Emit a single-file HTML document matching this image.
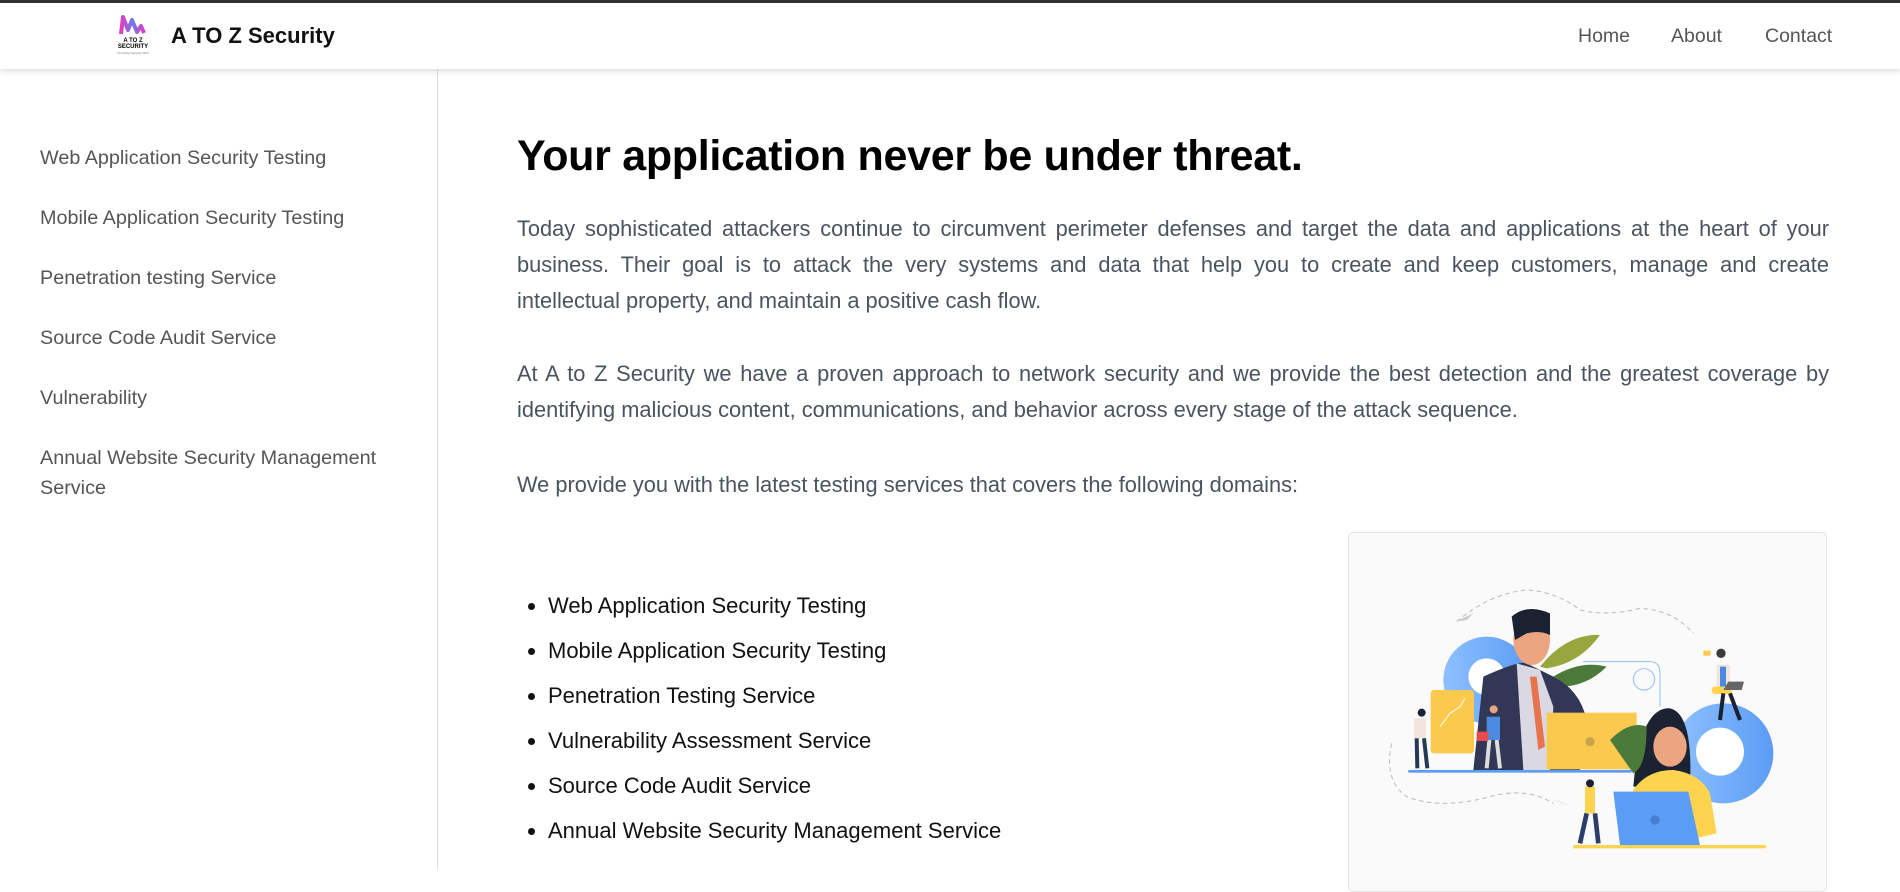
<!DOCTYPE html>
<html><head><meta charset="utf-8"><style>
*{margin:0;padding:0;box-sizing:border-box}
body{width:1900px;height:869px;overflow:hidden;background:#fff;font-family:"Segoe UI","Liberation Sans",sans-serif;position:relative}
.topbar{position:absolute;left:0;top:0;width:1900px;height:3px;background:#333}
.header{position:absolute;left:0;top:3px;width:1900px;height:66px;background:#fff;box-shadow:0 2px 6px rgba(0,0,0,.15);z-index:2}
.title{position:absolute;left:171px;top:20px;font-size:22px;font-weight:bold;color:#111}
.nav a{position:absolute;top:22px;font-size:19.5px;color:#555;text-decoration:none}
.side{position:absolute;left:0;top:69px;width:438px;height:800px;border-right:1px solid #ddd}
.side div{position:absolute;left:40px;font-size:19.8px;color:#555;line-height:30px}
h1{position:absolute;left:517px;top:132px;font-size:43px;font-weight:bold;color:#000;white-space:nowrap;letter-spacing:-0.3px}
.p{position:absolute;left:517px;width:1312px;font-size:21.8px;color:#4a5360;line-height:36px}
.p .j{text-align:justify;text-align-last:justify}
ul{position:absolute;left:530px;top:583px;font-size:22px;color:#111;line-height:45px;padding-left:18px}
.box{position:absolute;left:1348px;top:532px;width:479px;height:360px;border:1px solid #e6e6e6;border-radius:5px;background:#fafafa}
</style></head><body>
<div class="topbar"></div>
<div class="header">
<svg style="position:absolute;left:110px;top:9px" width="46" height="48" viewBox="0 0 46 48">
<defs><linearGradient id="lg" x1="0" x2="1"><stop offset="0" stop-color="#e23dbd"/><stop offset=".5" stop-color="#6d7bf0"/><stop offset="1" stop-color="#e23dbd"/></linearGradient></defs>
<path d="M11 22 L13 5 L18 18 L22 8 L27 20 L31 14 L34 21" fill="none" stroke="url(#lg)" stroke-width="4" stroke-linejoin="round"/>
<text x="23" y="30" font-size="6" font-weight="bold" text-anchor="middle" font-family="Liberation Sans">A TO Z</text>
<text x="23" y="36" font-size="6" font-weight="bold" text-anchor="middle" font-family="Liberation Sans">SECURITY</text>
<text x="23" y="42" font-size="3" text-anchor="middle" fill="#777" font-family="Liberation Sans">Providing Security With</text>
</svg>
<div class="title">A TO Z Security</div>
<div class="nav"><a style="left:1578px">Home</a><a style="left:1671px">About</a><a style="left:1765px">Contact</a></div>
</div>
<div class="side">
<div style="top:74px">Web Application Security Testing</div>
<div style="top:134px">Mobile Application Security Testing</div>
<div style="top:194px">Penetration testing Service</div>
<div style="top:254px">Source Code Audit Service</div>
<div style="top:314px">Vulnerability</div>
<div style="top:374px">Annual Website Security Management<br>Service</div>
</div>
<h1>Your application never be under threat.</h1>
<div class="p" style="top:211px">
<div class="j">Today sophisticated attackers continue to circumvent perimeter defenses and target the data and applications at the heart of your</div>
<div class="j">business. Their goal is to attack the very systems and data that help you to create and keep customers, manage and create</div>
<div>intellectual property, and maintain a positive cash flow.</div>
</div>
<div class="p" style="top:356px">
<div class="j">At A to Z Security we have a proven approach to network security and we provide the best detection and the greatest coverage by</div>
<div>identifying malicious content, communications, and behavior across every stage of the attack sequence.</div>
</div>
<div class="p" style="top:467px"><div>We provide you with the latest testing services that covers the following domains:</div></div>
<ul>
<li>Web Application Security Testing</li>
<li>Mobile Application Security Testing</li>
<li>Penetration Testing Service</li>
<li>Vulnerability Assessment Service</li>
<li>Source Code Audit Service</li>
<li>Annual Website Security Management Service</li>
</ul>
<div class="box"></div>
<svg style="position:absolute;left:1340px;top:520px" width="500" height="349" viewBox="0 0 1500 1047">
<defs><linearGradient id="bg" x1="0" x2="1"><stop offset="0" stop-color="#8ec0ff"/><stop offset="1" stop-color="#5b9cf5"/></linearGradient></defs>
<path d="M350 305 Q450 220 560 210 Q650 215 720 270 Q800 290 900 265 Q1000 270 1060 340" fill="none" stroke="#bbb" stroke-width="3" stroke-dasharray="14 10"/>
<path d="M155 670 Q130 780 200 830 Q300 870 450 830 Q560 800 640 850" fill="none" stroke="#bbb" stroke-width="3" stroke-dasharray="14 10"/>
<path d="M345 305 L400 280 L380 300Z M640 840 L700 860 L660 845Z" fill="#ccc"/>
<circle cx="440" cy="480" r="130" fill="url(#bg)"/><circle cx="440" cy="470" r="55" fill="#fff"/>
<circle cx="1150" cy="700" r="150" fill="url(#bg)"/><circle cx="1140" cy="695" r="72" fill="#fff"/>
<path d="M730 425 L930 425 Q960 425 960 460 L960 560" fill="none" stroke="#8ec0ff" stroke-width="3"/>
<circle cx="912" cy="478" r="32" fill="none" stroke="#8ec0ff" stroke-width="3"/>
<path d="M600 440 Q680 340 780 345 Q720 430 620 445Z" fill="#97a63d"/>
<path d="M640 470 Q720 420 800 440 Q740 500 660 500Z" fill="#4b7a3a"/>
<rect x="272" y="510" width="130" height="190" rx="10" fill="#fcc94f"/>
<path d="M300 620 L330 580 L360 560 L375 535" stroke="#fff" stroke-width="3" fill="none"/>
<path d="M400 750 L430 470 Q540 420 560 430 L640 470 Q720 510 740 600 L720 750Z" fill="#323755"/>
<path d="M530 430 L600 450 L640 560 L630 750 L550 750Z" fill="#d9d8e3"/>
<path d="M570 470 L590 470 L615 680 L595 690Z" fill="#e8744e"/>
<ellipse cx="575" cy="360" rx="55" ry="75" fill="#eba681"/>
<path d="M515 290 Q560 250 630 280 L630 345 Q600 330 560 340 L525 360Z" fill="#1b2231"/>
<rect x="620" y="578" width="270" height="170" fill="#fcc94f"/>
<circle cx="750" cy="665" r="14" fill="#c9a54a"/>
<rect x="205" y="750" width="670" height="8" fill="#5b9cf5"/>
<path d="M880 800 Q900 560 990 565 Q1060 580 1050 800Z" fill="#1b2231"/>
<ellipse cx="990" cy="680" rx="50" ry="60" fill="#eba681"/>
<path d="M880 810 Q920 750 1000 750 Q1080 760 1110 820 L1130 940 L1000 970 L880 960Z" fill="#fdd350"/>
<path d="M820 815 L1045 815 L1080 975 L840 975Z" fill="#5b9cf5"/>
<circle cx="945" cy="900" r="14" fill="#4a7ed0"/>
<path d="M810 660 Q870 600 920 620 Q920 740 880 760Z" fill="#4b7a3a"/>
<rect x="700" y="975" width="578" height="10" fill="#fdd350"/>
<rect x="735" y="800" width="30" height="80" fill="#fdd350"/><path d="M740 880 L720 970 M765 880 L775 970" stroke="#2b3d6b" stroke-width="14"/>
<circle cx="750" cy="790" r="12" fill="#1b2231"/>
<rect x="222" y="595" width="35" height="60" fill="#f2e3dc"/><path d="M230 655 L232 745 M252 655 L262 745" stroke="#233a55" stroke-width="12"/><circle cx="245" cy="578" r="12" fill="#1b2231"/>
<rect x="440" y="590" width="40" height="70" fill="#4a8ae0"/><path d="M448 660 L440 745 M470 660 L480 745" stroke="#ddd" stroke-width="12"/><circle cx="461" cy="568" r="12" fill="#eba681"/><rect x="410" y="635" width="35" height="28" fill="#e74c4c"/>
<rect x="1130" y="435" width="40" height="70" fill="#f2e3dc"/><rect x="1140" y="440" width="18" height="60" fill="#4a8ae0"/><rect x="1115" y="500" width="60" height="22" rx="10" fill="#fdd350"/>
<path d="M1150 520 L1140 600 M1170 520 L1200 600" stroke="#1b2231" stroke-width="12"/><circle cx="1143" cy="400" r="14" fill="#3b3b3b"/><rect x="1090" y="392" width="22" height="15" fill="#fcc94f"/><path d="M1150 510 L1205 510 L1212 485 L1165 485Z" fill="#666"/>
</svg>
</body></html>
